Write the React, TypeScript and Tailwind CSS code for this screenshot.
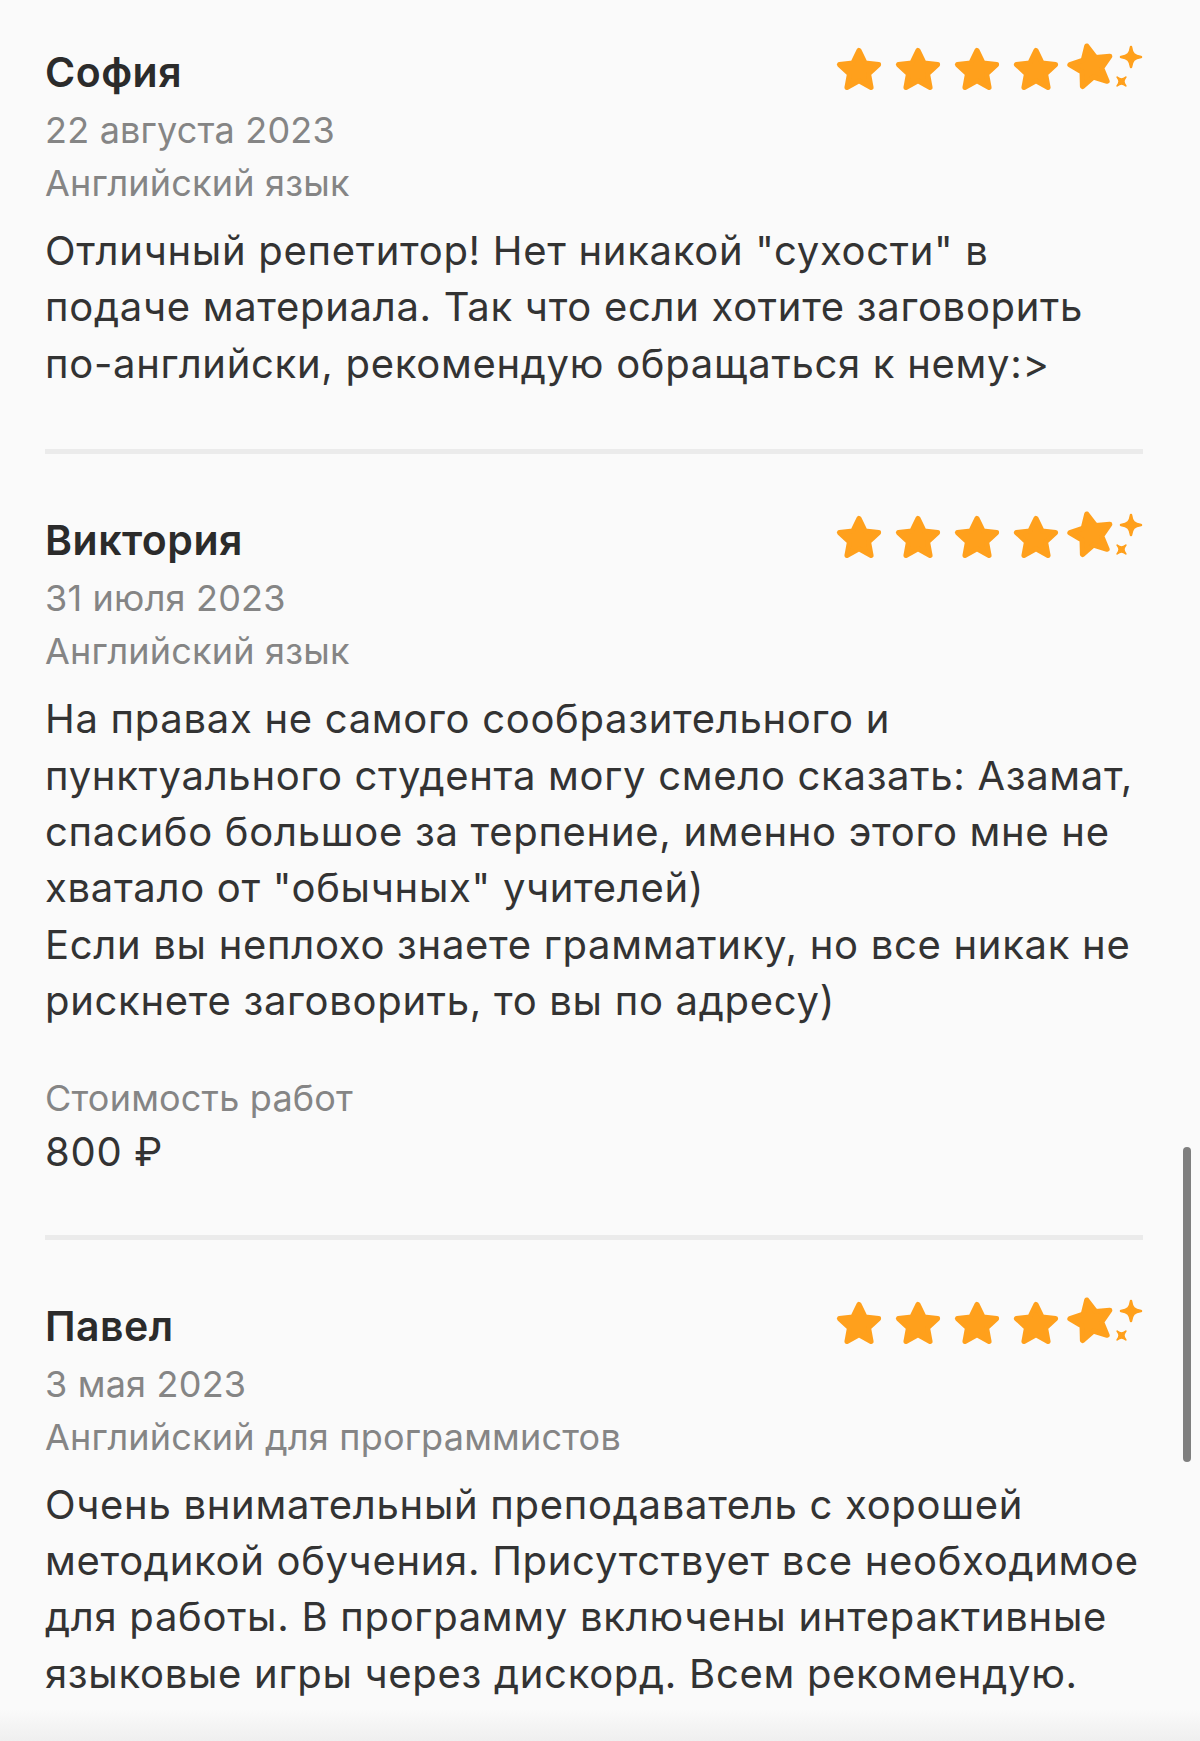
import React from "react";

type Review = {
  name: string;
  date: string;
  subject: string;
  lines: string[];
  price?: string;
};

const reviews: Review[] = [
  {
    name: "София",
    date: "22 августа 2023",
    subject: "Английский язык",
    lines: [
      'Отличный репетитор! Нет никакой "сухости" в',
      "подаче материала. Так что если хотите заговорить",
      "по-английски, рекомендую обращаться к нему:>",
    ],
  },
  {
    name: "Виктория",
    date: "31 июля 2023",
    subject: "Английский язык",
    lines: [
      "На правах не самого сообразительного и",
      "пунктуального студента могу смело сказать: Азамат,",
      "спасибо большое за терпение, именно этого мне не",
      'хватало от "обычных" учителей)',
      "Если вы неплохо знаете грамматику, но все никак не",
      "рискнете заговорить, то вы по адресу)",
    ],
    price: "800 ₽",
  },
  {
    name: "Павел",
    date: "3 мая 2023",
    subject: "Английский для программистов",
    lines: [
      "Очень внимательный преподаватель с хорошей",
      "методикой обучения. Присутствует все необходимое",
      "для работы. В программу включены интерактивные",
      "языковые игры через дискорд. Всем рекомендую.",
    ],
  },
];

const STAR =
  "12,2.6 14.9,8.6 21.4,9.4 16.6,13.9 17.8,20.4 12,17.2 6.2,20.4 7.4,13.9 2.6,9.4 9.1,8.6";

function Star({ className = "" }: { className?: string }) {
  return (
    <svg viewBox="0 0 24 24" className={className}>
      <polygon
        points={STAR}
        fill="#FFA01C"
        stroke="#FFA01C"
        strokeWidth={2.4}
        strokeLinejoin="round"
      />
    </svg>
  );
}

function Sparkle({ className = "" }: { className?: string }) {
  return (
    <svg viewBox="0 0 24 24" className={className}>
      <path
        d="M12 2 C13 9 15 11 22 12 C15 13 13 15 12 22 C11 15 9 13 2 12 C9 11 11 9 12 2 Z"
        fill="#FFA01C"
        stroke="#FFA01C"
        strokeWidth={2.5}
        strokeLinejoin="round"
      />
    </svg>
  );
}

function Rating() {
  return (
    <div className="flex items-start gap-[9px] pt-[2px]">
      <Star className="w-[50px] h-[50px]" />
      <Star className="w-[50px] h-[50px]" />
      <Star className="w-[50px] h-[50px]" />
      <Star className="w-[50px] h-[50px]" />
      <div className="flex items-start -ml-[5px]">
        <Star className="w-[52px] h-[52px] -mt-[5px] -rotate-[12deg]" />
        <div className="flex flex-col -ml-[3px]">
          <Sparkle className="w-[24px] h-[24px] ml-[5px] mt-[0px]" />
          <Sparkle className="w-[15px] h-[15px] ml-[0px] mt-[5px] rotate-45" />
        </div>
      </div>
    </div>
  );
}

function ReviewItem({ r, last }: { r: Review; last: boolean }) {
  return (
    <section className={last ? "" : "pb-[57px]"}>
      <div className="flex items-start justify-between">
        <div className="flex flex-col">
          <div className="text-[41px] leading-[58px] font-semibold tracking-[0.5px] text-[#2b2b2b]">
            {r.name}
          </div>
          <div className="mt-[3px] text-[36px] leading-[53px] tracking-[0.2px] text-[#858585]">
            {r.date}
          </div>
          <div className="text-[36px] leading-[53px] tracking-[0.2px] text-[#858585]">
            {r.subject}
          </div>
        </div>
        <Rating />
      </div>
      <div className="mt-[13px] text-[40px] leading-[56.4px] tracking-[0.7px] text-[#333333] whitespace-nowrap">
        {r.lines.map((l, i) => (
          <div key={i}>{l}</div>
        ))}
      </div>
      {r.price && (
        <div className="mt-[42px]">
          <div className="text-[36px] leading-[53px] tracking-[0.2px] text-[#858585]">
            Стоимость работ
          </div>
          <div className="text-[40px] leading-[53px] tracking-[0.7px] text-[#333333]">
            {r.price}
          </div>
        </div>
      )}
    </section>
  );
}

export default function App() {
  return (
    <div
      className="relative h-[1741px] overflow-hidden bg-[#fafafa]"
      style={{ fontFamily: "Inter, 'Noto Sans', sans-serif" }}
    >
      <div className="pl-[45px] pr-[57px] pt-[43px]">
        {reviews.map((r, i) => (
          <div key={r.name}>
            <ReviewItem r={r} last={i === reviews.length - 1} />
            {i < reviews.length - 1 && (
              <div className="h-[5px] bg-[#ebebeb] mb-[57px]" />
            )}
          </div>
        ))}
      </div>
      {/* scroll indicator */}
      <div className="absolute right-[9px] top-[1147px] h-[315px] w-[8px] rounded-full bg-[#7f7f7f]" />
      {/* bottom fade */}
      <div className="absolute inset-x-0 bottom-0 h-[32px] bg-gradient-to-b from-[#fafafa00] to-[#efefef]" />
    </div>
  );
}
